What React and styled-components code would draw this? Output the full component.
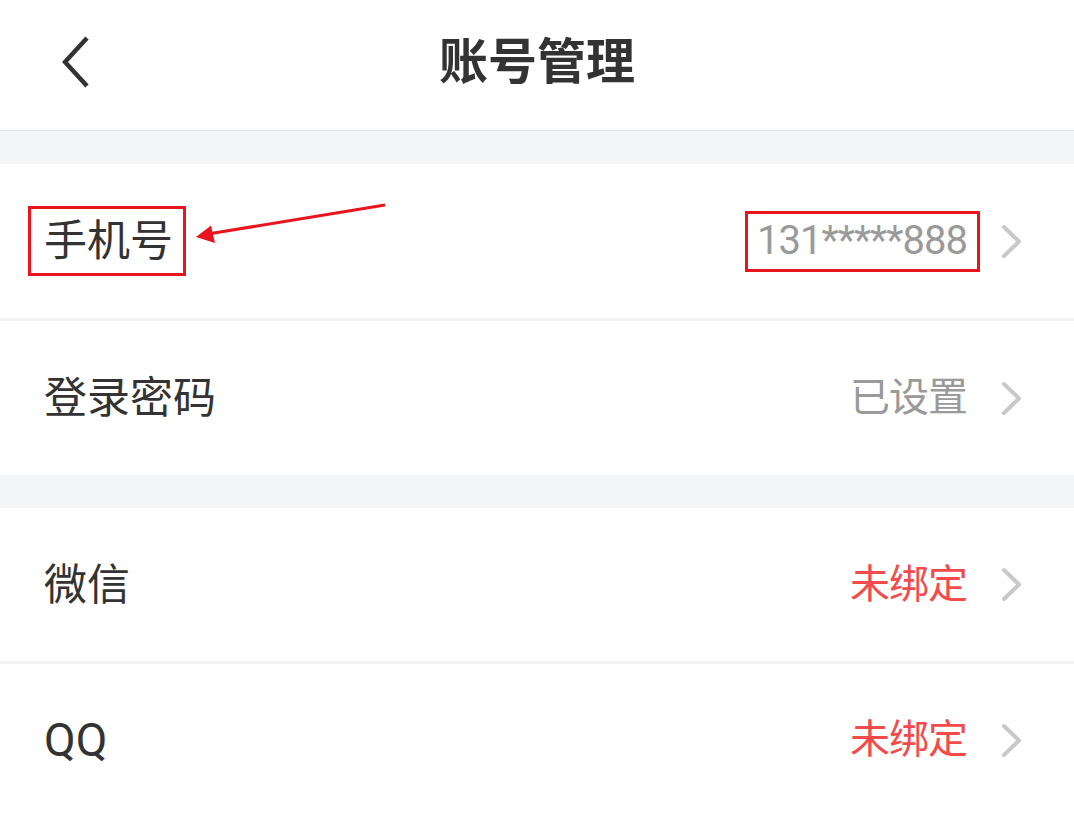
import React from "react";
import styled, { createGlobalStyle } from "styled-components";

const GlobalStyle = createGlobalStyle`
  html, body {
    margin: 0;
    padding: 0;
    background: #ffffff;
  }
  body {
    font-family: "Roboto", "Noto Sans CJK SC", sans-serif;
    color: #333333;
  }
`;

const Page = styled.div`
  position: relative;
  width: 1074px;
  min-height: 816px;
  background: #ffffff;
  overflow: hidden;
`;

const Header = styled.header`
  height: 130px;
  display: grid;
  grid-template-columns: 1fr auto 1fr;
  align-items: center;
  border-bottom: 1px solid #e6e7e9;
`;

const BackButton = styled.button`
  justify-self: start;
  margin-left: 62px;
  margin-bottom: 6px;
  padding: 0;
  border: 0;
  background: none;
  display: flex;
  cursor: pointer;
`;

const Title = styled.h1`
  margin: 0 0 6px;
  font-size: 49px;
  font-weight: 700;
  color: #333333;
  line-height: 1;
`;

const Gap = styled.div`
  height: 33px;
  background: #f4f5f7;
`;

const Group = styled.section`
  background: #ffffff;
`;

const Row = styled.div`
  height: ${(p) => p.$h || 154}px;
  display: flex;
  align-items: center;
  padding: 0 52px 0 44px;
  & + & {
    border-top: 3px solid #f4f4f5;
  }
`;

const Label = styled.span`
  flex: 1;
  font-size: ${(p) => (p.$latin ? 46 : 43)}px;
  line-height: 44px;
  color: #333333;
  ${(p) =>
    p.$marked &&
    `
    flex: 0 0 auto;
    margin-left: -16px;
    padding: 10px 10px 10px 13px;
    border: 3px solid #e8141e;
  `}
`;

const Spacer = styled.span`
  flex: 1;
`;

const Value = styled.span`
  font-size: 40px;
  line-height: 44px;
  letter-spacing: -1px;
  color: ${(p) => (p.$alert ? "#f34b4b" : "#9a9a9a")};
  margin-right: 34px;
  ${(p) =>
    p.$marked &&
    `
    margin-right: 21px;
    padding: 5px 10px 6px 9px;
    border: 3px solid #e8141e;
  `}
`;

const Overlay = styled.svg`
  position: absolute;
  left: 0;
  top: 0;
  pointer-events: none;
`;

const Chevron = () => (
  <svg width="21" height="35" viewBox="0 0 21 35" fill="none">
    <polyline
      points="3,3 18,17.5 3,32"
      stroke="#c9c9c9"
      strokeWidth="4"
      strokeLinecap="round"
      strokeLinejoin="round"
    />
  </svg>
);

const BackIcon = () => (
  <svg width="28" height="52" viewBox="0 0 28 52" fill="none">
    <polyline points="25,2 3,26 25,50" stroke="#333333" strokeWidth="4.5" />
  </svg>
);

export default () => {
  return (
    <Page>
      <GlobalStyle />
      <Header>
        <BackButton aria-label="返回">
          <BackIcon />
        </BackButton>
        <Title>账号管理</Title>
        <span />
      </Header>
      <Gap />
      <Group>
        <Row>
          <Label $marked>手机号</Label>
          <Spacer />
          <Value $marked>131*****888</Value>
          <Chevron />
        </Row>
        <Row>
          <Label>登录密码</Label>
          <Value>已设置</Value>
          <Chevron />
        </Row>
      </Group>
      <Gap />
      <Group>
        <Row $h={153}>
          <Label>微信</Label>
          <Value $alert>未绑定</Value>
          <Chevron />
        </Row>
        <Row $h={152}>
          <Label $latin>QQ</Label>
          <Value $alert>未绑定</Value>
          <Chevron />
        </Row>
      </Group>
      <Overlay width="1074" height="816" viewBox="0 0 1074 816">
        <line x1="385" y1="205" x2="208" y2="234" stroke="#e8141e" strokeWidth="3" />
        <polygon points="196,237 211,225.5 215,243" fill="#e8141e" />
      </Overlay>
    </Page>
  );
};
